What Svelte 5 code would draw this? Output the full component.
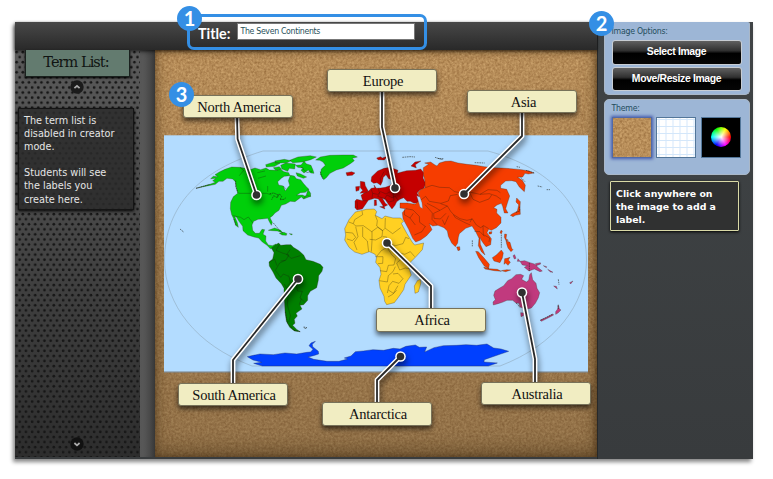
<script>
  const labels = [
    { text: 'North America', x: 182.5, y: 94.5, line: '237,117 237.6,139 256.5,195' },
    { text: 'Europe', x: 326.5, y: 68.5, line: '382,92 382,127 395,188' },
    { text: 'Asia', x: 467, y: 89.5, line: '522,112 522,136 464,194' },
    { text: 'Africa', x: 375.5, y: 308, line: '431,308 431,286 387,243' },
    { text: 'South America', x: 177.5, y: 382.5, line: '233,383 233,360 298,279' },
    { text: 'Antarctica', x: 321.5, y: 402, line: '377,402 377,380 400.5,356.5' },
    { text: 'Australia', x: 480.5, y: 381.5, line: '535,382 535,359 522,292.5' }
  ];
  const tip = (line) => line.split(' ').at(-1).split(',');
</script>

{#snippet cork(id, seed)}
  <svg class="cork" aria-hidden="true">
    <filter id={id} x="0" y="0" width="100%" height="100%" color-interpolation-filters="sRGB">
      <feTurbulence type="fractalNoise" baseFrequency="0.42" numOctaves="3" seed={seed} />
      <feColorMatrix values=".26 0 0 0 .59  .27 0 0 0 .42  .24 0 0 0 .23  0 0 0 0 1" />
    </filter>
    <rect width="100%" height="100%" filter="url(#{id})" />
  </svg>
{/snippet}

<div class="stage">
  <div class="app">
    <div class="main">
      <header>
        <span class="title">Title:</span>
        <div class="input">The Seven Continents</div>
      </header>
      <div class="body">
        <aside class="terms">
          <svg class="mesh" aria-hidden="true">
            <pattern id="holes" width="6.2" height="10.13" patternUnits="userSpaceOnUse">
              <circle cx="1.6" cy="2" r="1.35" /><circle cx="4.7" cy="7.06" r="1.35" />
            </pattern>
            <rect width="100%" height="100%" fill="url(#holes)" />
          </svg>
          <div class="column">
            <h2>Term List:</h2>
            <svg class="arrow" viewBox="0 0 14 14"><circle cx="7" cy="7" r="6.7" /><path d="M4.4 8.2 7 5.9 9.6 8.2" /></svg>
            <div class="message">The term list is<br />disabled in creator<br />mode.<br /><br />Students will see<br />the labels you<br />create here.</div>
            <svg class="arrow down" viewBox="0 0 14 14"><circle cx="7" cy="7" r="6.7" /><path d="M4.4 6 7 8.3 9.6 6" /></svg>
          </div>
        </aside>
        <div class="rail"></div>
        <div class="board">{@render cork('corkBoard', 4)}<div class="shade"></div></div>
      </div>
    </div>
    <aside class="options">
      <section class="panel first">
        <h3>Image Options:</h3>
        <button>Select Image</button>
        <button>Move/Resize Image</button>
      </section>
      <section class="panel second">
        <h3>Theme:</h3>
        <div class="themes">
          <div class="theme active">{@render cork('corkThumb', 9)}</div>
          <div class="theme grid"></div>
          <div class="theme dark"><i></i></div>
        </div>
      </section>
      <div class="hint">Click anywhere on<br />the image to add a<br />label.</div>
    </aside>
  </div>

  <svg class="map" viewBox="0 0 773 479">
    <rect x="164" y="135.3" width="424" height="237" fill="#b3dcff" />
    <path d="M164 372H588" stroke="#6b665f" stroke-width=".8" />
    <path class="globe" d="M263 151H488C550 168 586 205 586.5 260C586 305 555 345 500 366H252C196 345 165 305 164.5 260C165 205 200 170 263 151Z" />

    <!-- North America -->
    <g class="land" fill="#00cf0a" transform="translate(160 135) scale(.33333)">
      <path d="M108 160 150 148 166 142 158 137 168 130 152 131 160 124 174 125 165 119 178 111 195 103 215 96 240 97 255 100 265 106 285 99 302 104 318 99 328 105 350 106 360 102 372 110 386 113 390 122 373 124 365 129 353 140 356 150 370 153 376 168 383 158 389 151 385 137 391 121 403 123 409 131 422 134 430 145 439 155 447 163 436 172 421 173 410 181 427 180 436 184 449 176 452 184 431 192 424 186 405 200 391 199 377 207 364 211 357 226 345 234 338 242 330 248 337 262 334 271 328 260 323 250 306 252 294 253 281 259 276 270 278 286 286 295 298 295 306 283 314 284 309 298 318 303 317 318 325 330 337 332 348 327 351 333 331 341 321 331 307 321 296 309 282 306 263 300 249 287 248 274 237 259 230 247 224 244 232 263 235 277 227 271 220 249 215 239 211 221 212 202 220 185 233 175 229 158 226 140 218 132 201 130 189 139 177 139 166 148 145 152Z" />
      <path d="m431 191 8-12 5-16 8 12-1 10-10-5ZM325 286l19-7 18 7 7 8-17-6-15-1ZM358 295l14-3 9 4-2 5-13-1ZM388 296l9 1-2 3Z" />
      <path d="m317 89 25-8 18 4-16 9-25 2ZM344 78l29-5 20 4-12 6-34 2ZM362 91l15-7 29 3-2 15-16-2-5 9-17-7ZM389 76l25-10 37-4 18 4-17 8-25 7-29 2ZM407 91l16-1 9-11 8 8 13 4 6 14 3 10-10-1-7-9-13 9-9-8 6-7-16-2ZM340 98l18-3 7 8-18 3ZM408 113l14 4 18 9-10 4-18-7Z" />
      <path d="M467 75 481 66 510 61 548 60 580 60 592 66 577 70 583 77 571 86 550 99 529 105 510 115 499 128 491 134 481 118 484 102 496 91 489 81 479 76Z" />
      <path class="coast" d="M227 137v18l7 18M222 252l7 21M481 110l7 22M424 96l17 17 14-4M329 176l12-2 14 6-5 7-9-5-6 12M352 188l6-12 7 9-5 9 12-1 6-5M340 264l7 8 9 11 6 8M60 282l12 10M108 160l42-12" />
      <path class="border" d="M240 97 251 106 238 122M236 175H320L335 180M219 242 242 247 252 254 265 246 278 263M323 153V170M292 113l23-5M294 130l24-7M370 153l8 9" />
    </g>

    <!-- South America -->
    <g class="land" fill="#008000" transform="translate(240 230) scale(.33333)">
      <path d="M94 54 107 44 116 39 122 46 139 44 153 44 160 52 177 62 191 75 198 89 219 94 241 103 249 112 246 124 236 137 235 151 230 173 211 184 203 197 203 211 191 224 180 226 186 237 176 244 168 250 172 258 163 268 165 280 158 286 171 299 181 305 163 303 149 292 139 274 135 245 134 221 132 198 132 175 124 161 108 144 99 126 88 108 87 96 98 87 102 68Z" />
      <path class="border" d="M119 43 108 61 127 69 147 75 137 91 122 93M151 58 140 74 154 85 181 77M88 96 104 88 111 107M136 91 119 99 106 121 122 142 130 132 147 139 151 157 139 174 133 162M151 157 167 162 173 183 187 184 180 204 194 216M139 174 145 192 142 224 151 257 146 277M184 206 178 224" />
      <path class="coast" d="M136 246l7 34 19 21 18 4M191 291l10 2-6 3Z" />
    </g>

    <!-- Africa and Europe -->
    <g class="land" transform="translate(335 140) scale(.33333)">
      <path fill="#ffd022" d="M61 216 78 212 94 208 118 207 125 215 121 226 141 236 150 228 174 234 197 234 206 244 199 250 216 281 232 307 239 315 266 309 262 329 242 351 226 367 221 382 229 405 216 424 210 433 206 449 191 471 178 488 155 494 149 484 147 469 135 444 132 421 138 403 135 383 122 367 125 350 119 342 103 335 81 343 59 336 42 322 29 300 32 285 29 266 42 239Z" />
      <path fill="#ffd022" d="M238 438 247 422 256 418 258 429 250 456 240 460Z" />
      <path class="border" d="M41 246 55 251 59 239 83 224 81 213M55 251 62 258 85 257 110 275 128 262 143 272 141 290 122 300 104 298M121 226 127 242 125 258 143 272 150 265 151 234M151 265 173 281 197 263M32 277 53 279 62 292 52 302 36 297M62 260 69 290 57 307 66 330M83 261 83 290 97 303 101 335M111 274 111 303 109 335M143 290 155 291 158 321 139 332 126 348M158 310 181 317 204 311 212 292 222 296M158 325 170 344 182 355 177 375 160 376 155 395 135 392M177 325 191 338 199 357 185 369 194 390 211 384 228 387M181 380 174 395 160 407 157 426 133 422M174 402 189 400 204 416 192 430 173 424 162 437 157 459M160 450 175 460 189 437M205 365 215 367M189 337 209 343 226 335 239 350M120 350H144L143 370 129 371M159 471l14-8 12-12" />
      <path fill="#c50000" d="M60 183 65 178 83 182 78 166 90 157 101 153 109 145 119 143 117 135 124 145 137 144 151 142 164 137 174 129 175 121 161 116 153 104 145 112 142 125 137 136 126 128 116 130 108 124 110 110 128 93 147 85 166 82 189 91 187 100 200 96 215 92 242 91 257 87 267 99 264 114 272 130 267 145 255 150 246 159 253 170 249 188 237 190 226 184 216 184 206 173 195 178 185 185 180 196 171 207 161 194 151 179 142 174 151 190 158 195 146 201 137 187 130 177 119 175 100 181 91 194 82 207 66 210 60 203Z" />
      <path fill="#c50000" d="m33 98 17-3 10 4-8 7-16 1ZM76 124l13 2 2 11 9 17-11 4-14 2 8-9-7-8ZM62 140l12-1-2 12-9 3ZM125 54l12-4 5 4 15-5-9 11-19-1ZM228 78l12-12 18-3-17 11 3 10ZM118 180l6 0 1 16-7 1ZM134 200l13-1 3 8Z" />
      <path class="border" d="M83 182 96 182M66 183 68 206M108 146 113 160 128 163 137 155 153 162 166 155 178 163 189 152 197 140 185 132 173 133M113 160 111 176M130 145 134 160 128 169 149 176 156 165 171 173 181 169 189 180M174 156 177 182 162 186 151 176M147 95 136 115 137 130M167 84 171 101 181 112" />
    </g>

    <!-- Asia -->
    <g class="land" fill="#f63d00" transform="translate(400 135) scale(.33333)">
      <path d="M70 98 86 88 74 84 92 81 105 90 111 93 118 84 136 79 153 78 174 84 201 88 229 91 253 95 281 98 304 99 333 101 365 104 387 108 402 114 385 117 375 115 368 126 353 127 367 136 376 151 373 170 358 156 348 140 335 137 317 138 302 151 302 160 320 163 329 183 322 205 317 221 324 234 313 234 308 214 304 205 291 210 281 218 291 223 290 234 303 247 303 264 289 278 274 286 266 283 261 293 274 311 272 329 258 335 251 326 244 316 240 307 241 328 250 348 255 360 244 350 235 332 237 310 228 292 216 273 197 280 178 296 175 307 173 324 166 335 155 324 145 304 142 288 132 278 114 271 98 273 88 266 96 284 79 303 62 315 47 321 38 310 26 283 9 251 7 233 17 221 0 219 0 204 22 204 45 208 54 200 59 188 54 173 62 164 75 158 75 139 70 118Z" />
      <path d="m331 241 5-4 16-8 4-20-8-8 2-12 11 11-1 18 1 20-15 3-7 4ZM170 336l9-1 1 10-6 2ZM227 349l8 1 18 20 15 18-2 13-14-9-16-24ZM251 396l17 5 24 2 12 6-21-2-28-5ZM277 368l12-8 15-15 6 9-3 15-7 14-18-5ZM314 297l6 1-2 13 7 5-7 1-5-10ZM318 317l12 5 5 18 4 4-6 6-9-11-4-12ZM314 371l7-1 9-3-5 8 6 7-7 9-7-7-5 4ZM303 286l4 2-3 9-4-4ZM267 291l9-1-2 7-7 0ZM304 407l16-3 12 1-15 5Z" />
      <path class="border" d="M76 158 96 151 119 157 148 158 164 170 180 173 208 171 240 178 268 176 289 183 303 193M77 184 59 198M77 184 88 199 123 205 145 198 151 182 173 178M208 171 219 193 239 202 267 192 275 180M240 178 264 164 291 166 301 173M81 205 103 216 120 226 142 213 122 206M75 209 97 234 96 253 112 270M142 213 152 229 161 239 180 251 201 256 217 252 229 270 242 278 251 272 266 281M120 226 101 235 102 250 121 252 138 235M127 254 134 269 146 242M160 239 166 248 195 263 211 270M18 221 39 225 58 244 59 262 78 276M14 222 13 239 30 249 46 270M30 249 40 235M43 300 66 290 75 275M223 289 240 290 253 304M249 272 250 299 269 309 267 321M210 262 216 250" />
      <path class="coast" d="M7 67 30 65 45 66M105 67l12 4 13 0M114 70l15 4M224 83l30 1M350 95l10 2M378 106l25 8M362 127l13 13M413 153l14 3M440 164h10M348 232l11-4 0-13M217 316v18M304 299v39" />
      <path fill="#b3dcff" stroke="#744" d="m50 182 10 4 6 17 2 18-8-5-5-18Z" />
    </g>

    <!-- Oceania -->
    <g class="land" fill="#c13a7e" transform="translate(440 240) scale(.33333)">
      <path d="M165 153 173 148 191 137 203 122 215 116 228 104 242 103 251 107 245 118 259 126 266 121 269 104 274 98 278 119 288 130 291 145 299 158 295 173 286 190 274 204 263 207 248 204 240 201 237 190 228 189 218 181 201 181 187 187 174 191 160 195 159 186 166 179 161 166Z" />
      <path d="M240 64 254 62 270 68 283 72 296 84 307 93 300 95 283 87 267 93 253 82 262 77 247 75ZM242 218l10 1-2 8-7 3ZM301 240l17-7 20-11 3 3-17 9-20 10ZM347 215l6-8 2-13 3 12 5 4-9 9-7 4ZM219 47l5-3 4 11-5 2ZM234 56l6 8-8 0ZM286 71l15-3 1 4-13 5ZM310 77l10 3-1 3ZM323 88l16 9-8-1ZM341 138l6 5 5 4-3-8ZM389 128l10-5-7 9Z" />
      <path class="coast" d="M228 189l7 6 4 7M301 241l18-9 20-10M354 196l1 11M355 118l2 16M268 69v24" />
    </g>

    <!-- Antarctica -->
    <path fill="#0040ff" stroke="#20306c" stroke-width="1.2" transform="translate(160 330) scale(.33333)" d="M262 80 280 76 300 72 340 74 375 69 410 72 441 67 452 66 459 58 447 47 453 39 466 34 457 43 458 50 475 64 476 72 460 77 444 81 461 88 501 94 537 94 563 87 553 84 573 78 586 65 610 63 639 59 671 61 700 55 720 57 738 49 766 45 778 52 800 51 794 66 822 53 850 47 890 46 918 44 950 46 981 42 1001 54 1023 57 1046 64 1022 72 996 81 973 89 972 96 1012 99 985 108 H307L281 100 305 97 279 90Z" />

    <g class="pins">
      {#each labels as { line }}
        {@const [cx, cy] = tip(line)}
        <g>
          <polyline points={line} stroke="#fff" stroke-width="4.8" />
          <circle {cx} {cy} r="5.3" fill="#fff" />
          <polyline points={line} stroke="#292929" stroke-width="1.8" />
          <circle {cx} {cy} r="3.8" fill="#303030" />
        </g>
      {/each}
    </g>
  </svg>

  {#each labels as { text, x, y }}
    <div class="label" style="left:{x}px;top:{y}px">{text}</div>
  {/each}

  <div class="outline"></div>
  <b class="badge" style="left:177px;top:6px">1</b>
  <b class="badge" style="left:589px;top:11px">2</b>
  <b class="badge" style="left:169px;top:82px">3</b>
</div>

<style>
  :global(body) { background: #fff; overflow: hidden; }
  .stage { position: relative; box-sizing: border-box; width: 773px; height: 479px; padding: 22px 20px 20px 15px; overflow: hidden; font-family: 'DejaVu Sans', Verdana, sans-serif; }
  .app { display: flex; height: 437px; box-shadow: -2px 3px 4px rgba(0,0,0,.48); background: #393c3e; }
  .main { width: 582px; display: flex; flex-direction: column; }
  header { height: 28px; display: flex; align-items: flex-start; background: linear-gradient(#484848, #292929); box-shadow: 0 1px 3px #000a; z-index: 1; }
  .title { margin: 3px 0 0 183px; width: 39px; font: 700 14.3px/18px Lato, sans-serif; color: #fff; }
  .input { box-sizing: border-box; width: 178px; height: 17px; margin-top: 1px; padding-left: 2.5px; border: 1px solid #777; background: #fff; color: #28505a; font: 8.7px/15px 'DejaVu Sans Condensed', 'DejaVu Sans', sans-serif; font-stretch: condensed; letter-spacing: -.32px; }
  .body { display: flex; height: 407px; }
  .terms { width: 125px; display: grid; background: linear-gradient(#5a5a5a, #2d2d2d); }
  .mesh { grid-area: 1 / 1; width: 125px; height: 407px; fill: #161616; }
  .column { grid-area: 1 / 1; z-index: 1; display: flex; flex-direction: column; }
  h2 { box-sizing: border-box; width: 105px; height: 27px; margin: 0 0 0 10px; padding-right: 3px; border: 1px solid #1a211e; border-top: 0; background: #637b6f; box-shadow: 0 1px 2px #000; color: #101412; font: 14.5px/25px 'DejaVu Serif', serif; letter-spacing: -.95px; text-align: center; }
  .arrow { width: 14px; height: 14px; margin: 3px 0 0 55px; fill: #1b1b1b; }
  .arrow path { fill: none; stroke: #aaa; stroke-width: 1.8; }
  .down { margin-top: auto; margin-bottom: 6px; fill: #111; }
  .message { box-sizing: border-box; width: 116px; height: 102px; margin: 14px 0 0 3px; padding: 5px 0 0 5px; border: 1px solid #151515; background: rgba(43,43,43,.84); box-shadow: 0 1px 3px #000; color: #e5e5e5; font-size: 9.7px; line-height: 13.1px; white-space: nowrap; }
  .rail { width: 15px; background: linear-gradient(90deg, #606060, #3d3d3d); box-shadow: inset 0 3px 5px #0003; }
  .board { flex: 1; display: grid; overflow: hidden; }
  .cork, .shade { grid-area: 1 / 1; width: 100%; height: 100%; display: block; }
  .shade { z-index: 1; background: linear-gradient(#503c2000, #4b392533 55%, #43352355 100%); box-shadow: inset 0 -7px 18px #32210a66, inset 0 2px 7px #2d1b0855, inset -2px 0 5px #2d1b0844; }
  .options { flex: 1; padding-left: 6.5px; background: linear-gradient(#404446, #383b3d); box-shadow: inset 1px 0 #27292a; }
  .panel { box-sizing: border-box; width: 146px; padding-left: 8px; border: 1px solid #aab8c8; background: #9db6d6; }
  .first { height: 73px; border-top: 0; border-radius: 2px 2px 5px 5px; }
  .second { height: 76px; margin-top: 4px; border-radius: 5px; }
  h3 { margin: 0 0 0 -1px; color: #244d5d; font: 8.7px/10px 'DejaVu Sans Condensed', 'DejaVu Sans', sans-serif; font-stretch: condensed; letter-spacing: -.25px; }
  .first h3 { padding: 4px 0 4px; }
  .second h3 { padding: 3px 0 4px; }
  button { display: block; box-sizing: border-box; width: 130px; height: 24.5px; margin: 0 0 2px -1px; padding: 0; border: 1px solid #c8cdd3; border-radius: 3px; background: linear-gradient(#606060 0, #303030 42%, #000 54%, #050505); color: #fff; font: 700 10.4px/20px 'Liberation Sans', Arial, sans-serif; letter-spacing: -.35px; }
  .themes { display: flex; gap: 4.5px; margin-left: -1px; }
  .theme { box-sizing: border-box; width: 40.2px; height: 40.5px; border: 1px solid #537699; background: #fff; overflow: hidden; }
  .active { border-color: #526aa6; box-shadow: 0 0 3px 1px #4258ad; }
  .grid { background: linear-gradient(90deg, #d4e7fa 1px, transparent 1px) 1.5px 0 / 7px 7px, linear-gradient(#d4e7fa 1px, #fff 1px) 0 1px / 7px 7px; }
  .dark { display: grid; place-items: center; background: #000; }
  .dark i { width: 20px; height: 20px; border-radius: 50%; background: radial-gradient(#fff 0, #fff0 65%), conic-gradient(from 90deg, #f00, #f0f, #00f, #0ff, #0f0, #ff0, #f00); }
  .hint { box-sizing: border-box; width: 129px; height: 50px; margin: 6px 0 0 6.5px; padding: 5px 0 0 5px; border: 1px solid #d9d9a6; border-radius: 1px; background: #303131; box-shadow: 0 1px 3px #000; color: #fff; font-weight: 700; font-size: 9.4px; line-height: 13px; white-space: nowrap; }
  .map { position: absolute; inset: 0; width: 773px; height: 479px; z-index: 2; }
  .globe { fill: none; stroke: #91a9bc; stroke-width: .6; }
  .land { stroke: #382b22; stroke-width: 1.2; stroke-opacity: .75; stroke-linejoin: round; }
  .border, .coast { fill: none; stroke: #1c1c12; stroke-width: 1.2; }
  .coast { stroke-width: 2.2; stroke-dasharray: 5 2; }
  .pins { fill: none; stroke-linejoin: round; }
  .pins g { filter: drop-shadow(1px 4px 3px rgba(0,0,0,.55)); }
  .label { position: absolute; z-index: 3; box-sizing: border-box; width: 110px; height: 23.5px; padding-left: 3px; border: 1px solid #77725a; border-radius: 3px; background: #f1edc2; box-shadow: 0 3px 5px rgba(0,0,0,.6); color: #111; font: 14.5px/23px 'Liberation Serif', 'Times New Roman', serif; letter-spacing: -.25px; text-align: center; }
  .outline { position: absolute; z-index: 4; box-sizing: border-box; left: 187px; top: 14px; width: 240px; height: 36px; border: 3px solid #348fe5; border-radius: 7px; }
  .badge { position: absolute; z-index: 5; width: 25px; height: 25px; border-radius: 50%; background: #348fe5; color: #fff; font: 700 20px/25px Lato, sans-serif; text-align: center; }
</style>
